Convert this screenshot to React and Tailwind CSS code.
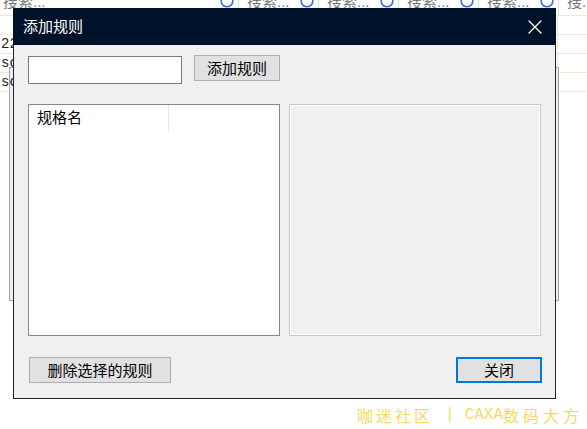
import { X } from 'lucide-react';

const cjk = { fontFamily: '"Noto Sans CJK SC", "Noto Sans", sans-serif' };
const mono = { fontFamily: '"Liberation Mono", "DejaVu Sans Mono", monospace' };
const sans = { fontFamily: '"Liberation Sans", Arial, sans-serif' };

function SearchField({ width, first }) {
  return (
    <div
      className={`flex h-full shrink-0 items-start justify-between overflow-hidden border-r border-[#dedede] ${first ? 'pl-[3px]' : 'pl-[8px]'} pr-[4px]`}
      style={{ width }}
    >
      <span className="-mt-[8px] shrink-0 whitespace-nowrap text-[15px] leading-[18px] text-[#777]" style={cjk}>
        搜索<span style={sans}>...</span>
      </span>
      <svg width="14" height="8" viewBox="0 0 14 8" className="shrink-0">
        <circle cx="7" cy="1" r="5.8" fill="none" stroke="#3f73c9" strokeWidth="1.6" />
      </svg>
    </div>
  );
}

function Row({ text }) {
  return (
    <div className="flex h-[19px] border-b border-[#ece9d8]">
      <div className="w-[557px] pl-[1px] text-[14px] leading-[19px] text-[#222]" style={mono}>
        {text}
      </div>
      <div className="flex-1 border-l border-[#ece9d8]" />
    </div>
  );
}

function Button({ children, className = '' }) {
  return (
    <button
      className={`flex h-[26px] items-center justify-center bg-[#e1e1e1] text-[15px] text-black ${className}`}
      style={cjk}
    >
      {children}
    </button>
  );
}

export default function App() {
  return (
    <div className="relative h-[429px] w-[587px] overflow-hidden bg-white">
      {/* background window */}
      <div className="flex h-[16px] border-b border-[#ece9d8]">
        <SearchField width={239} first />
        <SearchField width={80} />
        <SearchField width={80} />
        <SearchField width={80} />
        <SearchField width={80} />
        <div className="flex-1 overflow-hidden pl-[8px]">
          <span className="-mt-[8px] block whitespace-nowrap text-[15px] leading-[18px] text-[#777]" style={cjk}>
            搜<span style={sans}>.</span>
          </span>
        </div>
      </div>
      <Row text="" />
      <Row text="22" />
      <Row text="sc" />
      <Row text="sc" />
      <div className="-mt-[25px] ml-[9px] h-[234px] w-[550px] border border-[#a0a0a0] bg-[#f0f0f0]" />

      {/* dialog */}
      <div className="absolute left-[13px] top-[8px] flex h-[391px] w-[543px] flex-col border-x border-b border-[#1b2436] bg-[#f0f0f0]">
        <div className="-mx-px flex h-[37px] shrink-0 items-center justify-between bg-[#001229] pl-[10px] pr-[9px]">
          <span className="text-[15px] text-white" style={cjk}>添加规则</span>
          <X className="h-[24px] w-[24px] text-white" strokeWidth={1.3} />
        </div>

        <div className="flex flex-col px-[14px]">
          <div className="mt-[10px] flex items-start gap-[12px]">
            <input className="mt-px h-[28px] w-[154px] border border-[#7a7a7a] bg-white outline-none" />
            <Button className="w-[86px] border border-[#adadad]">添加规则</Button>
          </div>

          <div className="mt-[20px] flex gap-[9px]">
            <div className="h-[232px] w-[252px] border border-[#828790] bg-white">
              <div className="flex h-[26px]">
                <div className="w-[140px] border-r border-[#e5e5e5] pl-[8px] text-[15px] leading-[24px] text-black" style={cjk}>
                  规格名
                </div>
              </div>
            </div>
            <div className="h-[232px] w-[252px] border border-[#cacaca] bg-[#f0f0f0] shadow-[inset_1px_1px_0_#ffffff,inset_-1px_-1px_0_#ffffff]" />
          </div>

          <div className="mt-[21px] flex items-start justify-between">
            <Button className="ml-px w-[142px] border border-[#adadad]">删除选择的规则</Button>
            <Button className="-mr-px w-[86px] border-2 border-[#0078d7]">关闭</Button>
          </div>
        </div>
      </div>

      {/* watermark */}
      <div className="absolute left-[357px] top-[403px] flex whitespace-nowrap text-[16px] leading-[24px] text-[#fbd866]">
        <span className="tracking-[3px]" style={cjk}>咖迷社区</span>
        <span className="ml-[12px] mr-[10px]" style={mono}>|</span>
        <span style={mono}>CAXA</span>
        <span className="tracking-[4px]" style={cjk}>数码大方</span>
      </div>
    </div>
  );
}
